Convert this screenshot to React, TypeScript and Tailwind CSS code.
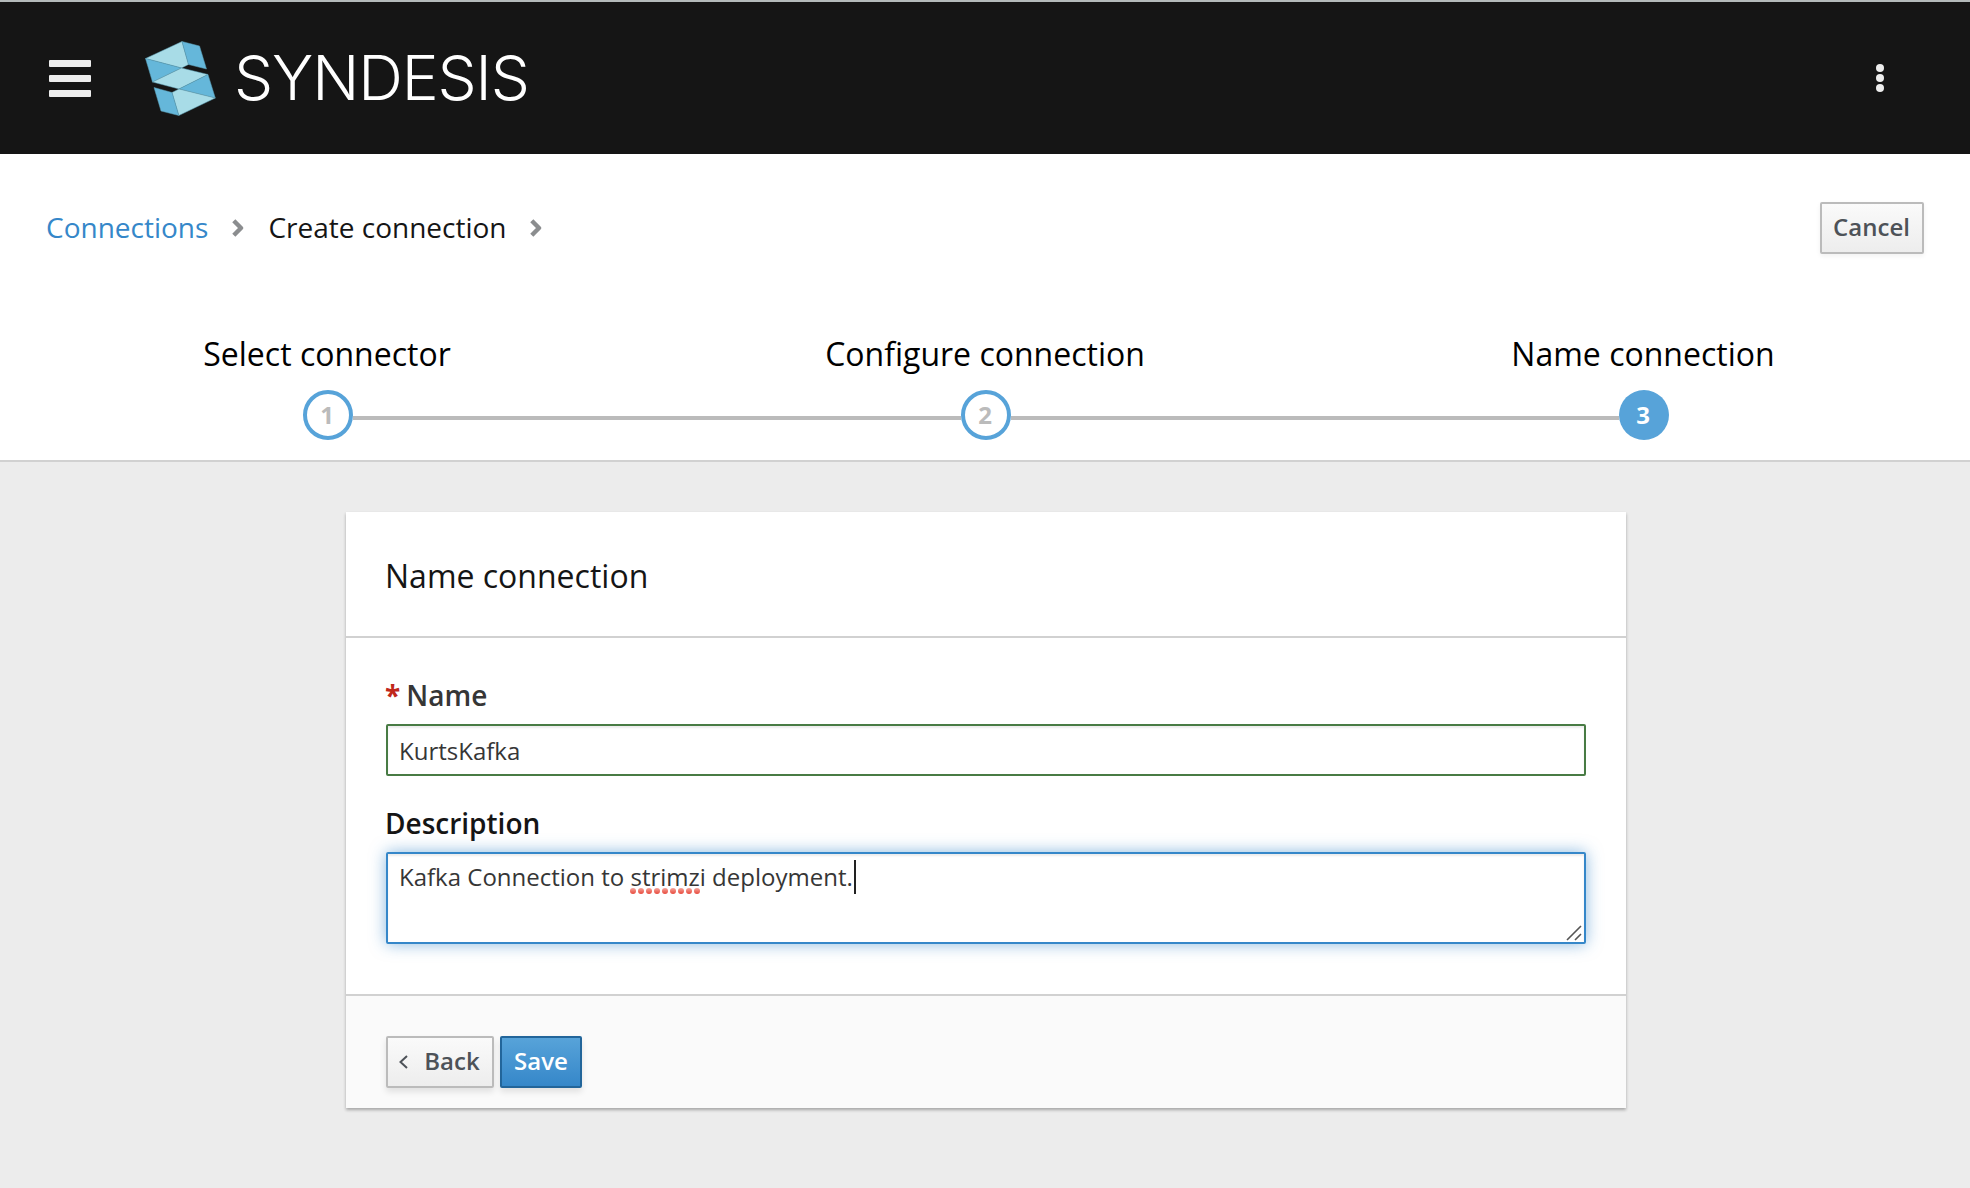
import React from 'react';

function Chevron() {
  return (
    <svg width="12" height="18" viewBox="0 0 12 18" className="shrink-0" fill="none" stroke="#8b8d8f" strokeWidth="4.4" strokeLinejoin="round">
      <path d="M1.8 1.8 L9 9 L1.8 16.2" />
    </svg>
  );
}

function Logo() {
  return (
    <svg width="71" height="75" viewBox="0 0 71 75" className="shrink-0">
      <g stroke="#5c9fb4" strokeWidth="0.5" strokeLinejoin="round">
        <path fill="#a8dce7" d="M0.5 17.5 L37 0.5 L43.5 23.5 L36.5 27 Z" />
        <path fill="#65b7da" d="M37 0.5 L54.5 5 L61.5 28 L43.5 23.5 Z" />
        <path fill="#65b7da" d="M0.5 17.5 L36.5 27 L7.5 41 Z" />
        <path fill="#a8dce7" d="M36.5 27 L63 33.5 L34 48 L7.5 41 Z" />
        <path fill="#65b7da" d="M63 33.5 L70.3 57 L34 48 Z" />
        <path fill="#a8dce7" d="M34 48 L70.3 57 L33.8 74.5 L27 51.5 Z" />
        <path fill="#65b7da" d="M9 46.5 L27 51.5 L33.8 74.5 L16 70 Z" />
      </g>
    </svg>
  );
}

function Header() {
  return (
    <header className="flex h-[154px] items-center border-t-2 border-[#b4baba] bg-[#151515] pl-[49px] pr-[86px]">
      <div className="flex w-[42px] flex-col gap-2">
        <span className="h-[7px] rounded-[1px] bg-[#ededed]" />
        <span className="h-[7px] rounded-[1px] bg-[#ededed]" />
        <span className="h-[7px] rounded-[1px] bg-[#ededed]" />
      </div>
      <div className="ml-[54px] flex items-center">
        <Logo />
        <span className="-mt-px ml-[18px] whitespace-nowrap font-['Inter'] text-[62px] font-light leading-[75px] tracking-[-1.1px] text-white">SYNDESIS</span>
      </div>
      <div className="ml-auto flex flex-col gap-[2px]">
        <span className="size-2 rounded-full bg-[#ededed]" />
        <span className="size-2 rounded-full bg-[#ededed]" />
        <span className="size-2 rounded-full bg-[#ededed]" />
      </div>
    </header>
  );
}

const steps = ['Select connector', 'Configure connection', 'Name connection'];

function Step({ title, index }: { title: string; index: number }) {
  const active = index === 2;
  return (
    <li className="flex w-[658px] shrink-0 flex-col items-center">
      <span className="h-11 whitespace-nowrap pr-[2px] text-[32px] leading-[44px] text-black">{title}</span>
      <div className="mt-[14px] flex w-full items-center">
        <span className={index > 0 ? 'mt-[6px] h-1 flex-1 bg-[#bbb]' : 'h-1 flex-1'} />
        <span
          className={
            active
              ? 'flex size-[50px] items-center justify-center rounded-full bg-[#57a3d9] pr-[2px] text-2xl font-bold text-white'
              : 'flex size-[50px] items-center justify-center rounded-full border-4 border-[#57a3d9] pr-[2px] text-2xl font-bold text-[#bbb]'
          }
        >
          {index + 1}
        </span>
        <span className={index < 2 ? 'mt-[6px] h-1 flex-1 bg-[#bbb]' : 'h-1 flex-1'} />
      </div>
    </li>
  );
}

const grayButton =
  'flex h-[52px] items-center justify-center rounded-[2px] border-2 border-[#bbb] bg-linear-to-b from-[#fafafa] to-[#ededed] pb-[2px] pr-[1px] text-2xl font-semibold text-[#4d5258]';

export default function App() {
  return (
    <div className="flex h-[1188px] w-[1970px] flex-col overflow-hidden bg-[#ececec] font-['Open_Sans',sans-serif]">
      <Header />
      <section className="h-[308px] border-b-2 border-[#d1d1d1] bg-white">
        <div className="flex items-start justify-between pl-[46px] pr-[46px] pt-12">
          <nav className="flex h-[52px] items-center pb-[2px] text-[28px] text-[#151515]">
            <a className="text-[#3587c9]">Connections</a>
            <span className="ml-[24px] mr-[24px] mt-[2px] flex"><Chevron /></span>
            <span>Create connection</span>
            <span className="ml-[23px] mt-[2px] flex"><Chevron /></span>
          </nav>
          <button className={grayButton + ' w-[104px] shadow-[0_2px_5px_rgba(3,3,3,0.06)]'}>Cancel</button>
        </div>
        <ol className="-ml-px mt-[78px] flex">
          {steps.map((title, i) => (
            <Step key={title} title={title} index={i} />
          ))}
        </ol>
      </section>
      <main className="ml-[346px] mt-[50px] w-[1280px] bg-white shadow-[0_2px_3px_rgba(3,3,3,0.3)]">
        <h2 className="flex h-[126px] items-center border-b-2 border-[#d1d1d1] pl-[39px] pt-[4px] text-[32px] text-[#151515]">Name connection</h2>
        <form className="flex h-[358px] flex-col border-b-2 border-[#d1d1d1] px-10 pt-[36px]">
          <label className="-ml-px flex h-[42px] items-center gap-[6px] text-[28px] font-semibold text-[#363636]">
            <span className="font-bold text-[#c0271b]">*</span>
            Name
          </label>
          <div className="mt-[8px] flex h-[52px] items-center rounded-[2px] border-2 border-[#487b44] px-[11px] pt-[1px] text-2xl text-[#363636] shadow-[inset_0_2px_2px_rgba(3,3,3,0.075)]">
            KurtsKafka
          </div>
          <label className="-ml-px mt-[26px] flex h-[42px] items-center text-[28px] font-semibold text-[#151515]">Description</label>
          <div className="relative mt-[8px] flex h-[92px] items-start rounded-[2px] border-2 border-[#3587c9] pl-[11px] pt-[5px] text-2xl leading-[36px] text-[#363636] shadow-[inset_0_2px_2px_rgba(3,3,3,0.075),0_0_16px_rgba(53,135,201,0.58)]">
            <span className="whitespace-pre">Kafka Connection to </span>
            <span className="relative">
              strimzi
              <svg className="absolute left-0 top-[29px]" width="72" height="6" viewBox="0 0 72 6">
                <defs>
                  <linearGradient id="spelling" x1="0" y1="0" x2="0" y2="1">
                    <stop offset="0" stopColor="#f4a59c" />
                    <stop offset="1" stopColor="#e8483b" />
                  </linearGradient>
                </defs>
                {[3, 11, 19, 27, 35, 43, 51, 59, 67].map((x) => (
                  <circle key={x} cx={x} cy="3" r="3" fill="url(#spelling)" />
                ))}
              </svg>
            </span>
            <span className="whitespace-pre"> deployment.</span>
            <span className="ml-px mt-px h-[34px] w-[2px] bg-[#222]" />
            <svg className="absolute bottom-px right-[2px]" width="16" height="16" viewBox="0 0 16 16" stroke="#555" strokeWidth="1.6">
              <path d="M1 15 L15 1 M9 15 L15 9" />
            </svg>
          </div>
        </form>
        <footer className="flex h-[112px] gap-[6px] bg-[#fafafa] pl-10 pt-10">
          <button className={grayButton + ' w-[108px] shadow-[0_4px_6px_rgba(3,3,3,0.1)]'}>
            <svg className="mr-[16px] mt-[2px]" width="9" height="14" viewBox="0 0 9 14" fill="none" stroke="#4d5258" strokeWidth="2">
              <path d="M8 1 L1.5 7 L8 13" />
            </svg>
            Back
          </button>
          <button className="flex h-[52px] w-[82px] items-center justify-center rounded-[2px] border-2 border-[#22659a] bg-linear-to-b from-[#57a3d9] to-[#3587c9] pb-[2px] text-2xl font-semibold text-white shadow-[0_4px_6px_rgba(3,3,3,0.1)]">
            Save
          </button>
        </footer>
      </main>
    </div>
  );
}
